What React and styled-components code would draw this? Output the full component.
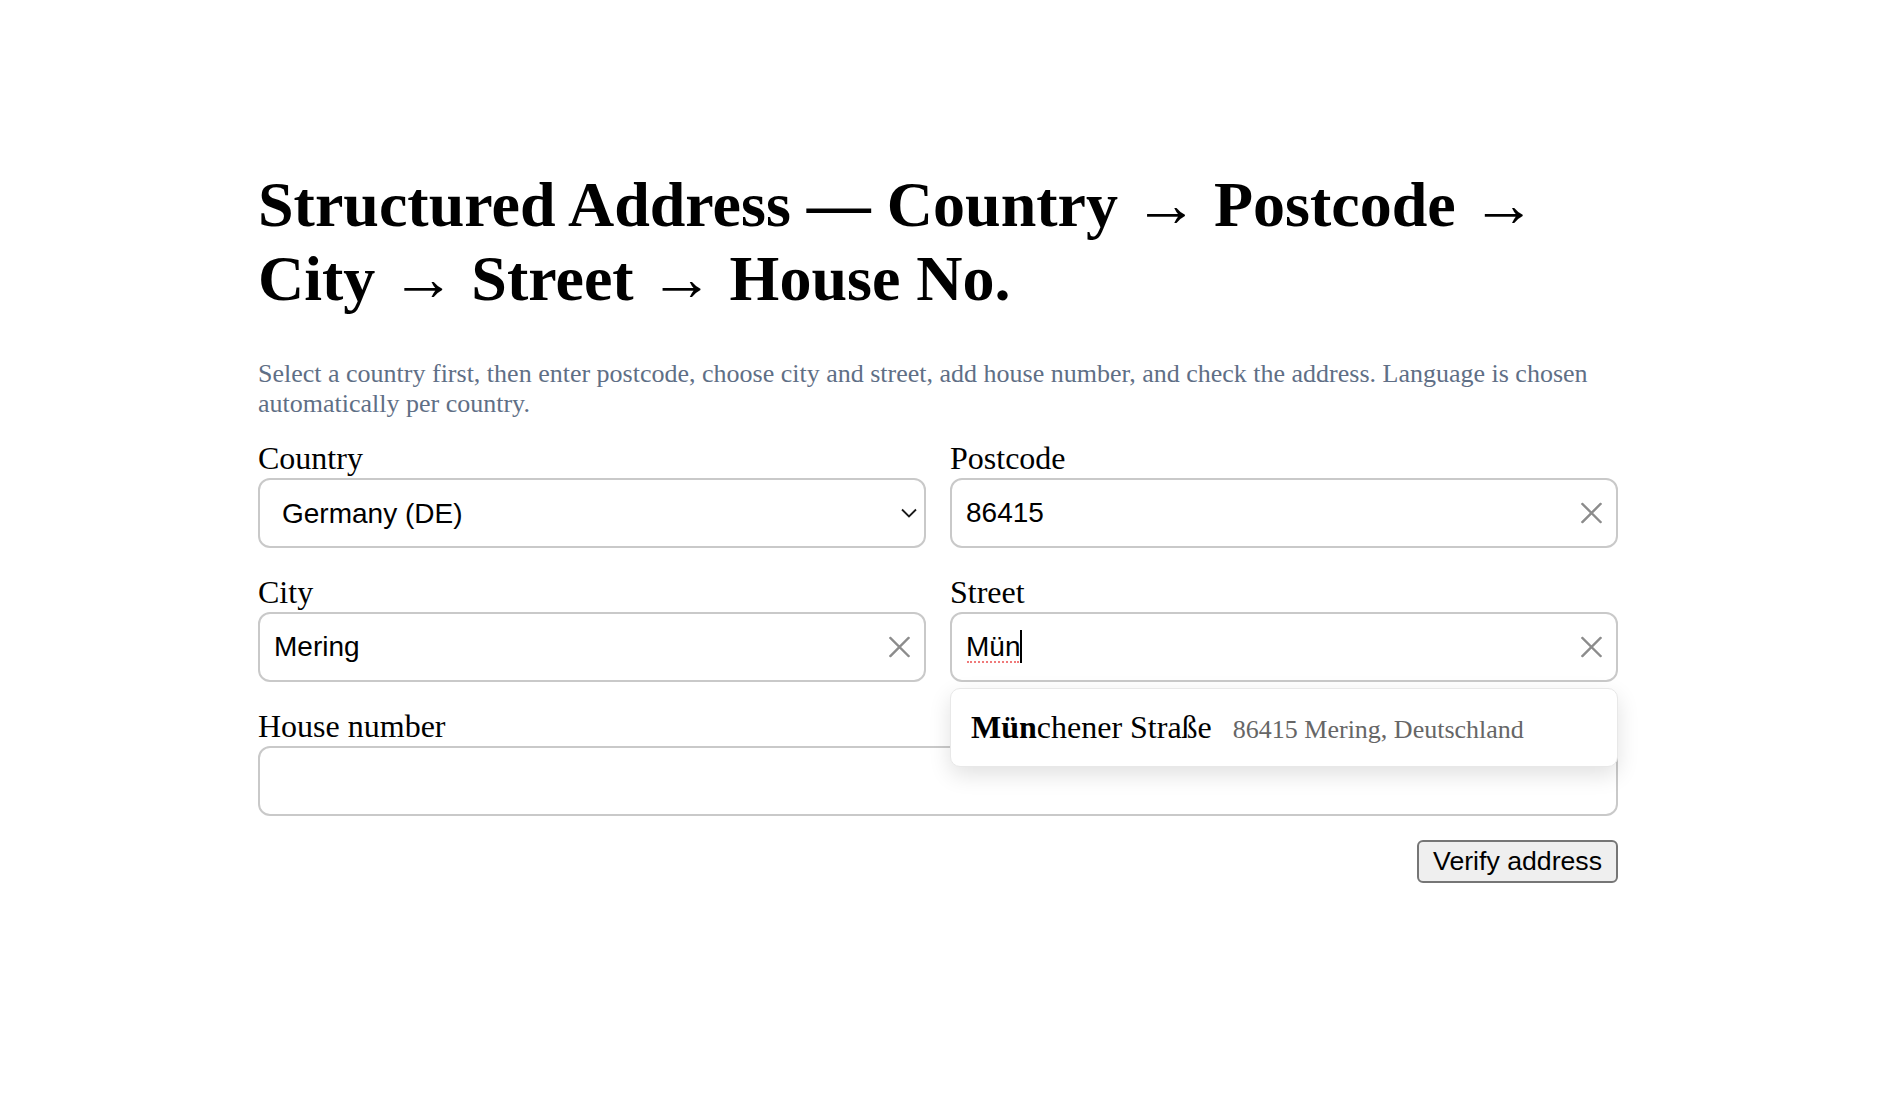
import React, { useState } from 'react';
import styled, { createGlobalStyle } from 'styled-components';

const GlobalStyle = createGlobalStyle`
  html, body {
    margin: 0;
    background: #fff;
  }
  body {
    font-family: "Liberation Serif", "Times New Roman", serif;
    color: #000;
  }
`;

const Page = styled.main`
  width: 1360px;
  padding: 168px 0 80px 258px;
`;

const Title = styled.h1`
  margin: 0 0 43px;
  font-size: 64px;
  font-weight: 700;
  line-height: normal;
`;

const Intro = styled.p`
  margin: 0 0 21px;
  font-size: 26px;
  line-height: normal;
  color: #5f6f86;
`;

const Form = styled.form`
  display: grid;
  grid-template-columns: 1fr 1fr;
  column-gap: 24px;
  row-gap: 26px;
`;

const Field = styled.div`
  display: flex;
  flex-direction: column;
  gap: 1px;
  grid-column: ${(p) => (p.$wide ? '1 / -1' : 'auto')};
`;

const Label = styled.label`
  font-size: 32px;
  line-height: normal;
`;

const Control = styled.div`
  position: relative;
  z-index: ${(p) => (p.$raised ? 3 : 'auto')};
`;

const TextInput = styled.input`
  box-sizing: border-box;
  width: 100%;
  height: 70px;
  padding: 0 56px 0 14px;
  border: 2px solid #c9c9c9;
  border-radius: 12px;
  background: #fff;
  color: #000;
  font: 28px "Liberation Sans", Arial, sans-serif;
  outline: none;
  caret-color: #000;
`;

const Select = styled.select`
  box-sizing: border-box;
  width: 100%;
  height: 70px;
  padding: 0 50px 0 22px;
  border: 2px solid #c9c9c9;
  border-radius: 12px;
  background: #fff;
  color: #000;
  font: 28px "Liberation Sans", Arial, sans-serif;
  appearance: none;
  outline: none;
`;

const Chevron = styled.svg`
  position: absolute;
  right: 9px;
  top: 50%;
  transform: translateY(-50%);
  pointer-events: none;
`;

const ClearButton = styled.button`
  position: absolute;
  right: 16px;
  top: 50%;
  transform: translateY(-50%);
  display: flex;
  padding: 0;
  border: none;
  background: none;
  cursor: pointer;
`;

const SpellMark = styled.span`
  position: absolute;
  left: 17px;
  top: 49px;
  width: ${(p) => p.$width}px;
  border-bottom: 2px dotted #f07a7a;
  pointer-events: none;
`;

const Caret = styled.span`
  position: absolute;
  left: ${(p) => p.$left}px;
  top: 18px;
  width: 2px;
  height: 33px;
  background: #000;
  pointer-events: none;
`;

const Suggestions = styled.ul`
  position: absolute;
  top: calc(100% + 6px);
  left: 0;
  right: 0;
  margin: 0;
  padding: 0;
  list-style: none;
  background: #fff;
  border: 1px solid #e8e8e8;
  border-radius: 10px;
  box-shadow: 0 8px 22px rgba(0, 0, 0, 0.12);
`;

const Suggestion = styled.li`
  display: flex;
  align-items: baseline;
  gap: 21px;
  padding: 20px 20px;
  cursor: pointer;
`;

const StreetName = styled.span`
  font-size: 32px;
  line-height: normal;
  strong {
    font-weight: 700;
  }
`;

const Place = styled.span`
  font-size: 26px;
  color: #666;
`;

const Actions = styled.div`
  display: flex;
  justify-content: flex-end;
  margin-top: 24px;
`;

const VerifyButton = styled.button`
  height: 43px;
  padding: 0 14px;
  border: 2px solid #767676;
  border-radius: 6px;
  background: #efefef;
  color: #000;
  font: 26.67px "Liberation Sans", Arial, sans-serif;
  cursor: pointer;
`;

const ClearIcon = () => (
  <svg width="21" height="21" viewBox="0 0 21 21">
    <path d="M1.5 1.5 L19.5 19.5 M19.5 1.5 L1.5 19.5" stroke="#8c8c8c" strokeWidth="2.4" strokeLinecap="square" fill="none" />
  </svg>
);

const STREETS = [{ name: 'Münchener Straße', place: '86415 Mering, Deutschland' }];

function ClearableInput({ value, onChange, children }) {
  return (
    <Control $raised={!!children}>
      <TextInput value={value} onChange={(e) => onChange(e.target.value)} />
      <ClearButton type="button" aria-label="Clear" onClick={() => onChange('')}>
        <ClearIcon />
      </ClearButton>
      {children}
    </Control>
  );
}

export default function App() {
  const [country, setCountry] = useState('DE');
  const [postcode, setPostcode] = useState('86415');
  const [city, setCity] = useState('Mering');
  const [street, setStreet] = useState('Mün');
  const [house, setHouse] = useState('');

  const typed = street.trim();
  const matches = typed
    ? STREETS.filter((s) => s.name.toLowerCase().startsWith(typed.toLowerCase()) && s.name !== typed)
    : [];

  return (
    <>
      <GlobalStyle />
      <Page>
        <Title>Structured Address — Country → Postcode → City → Street → House No.</Title>
        <Intro>
          Select a country first, then enter postcode, choose city and street, add house number, and check the
          address. Language is chosen automatically per country.
        </Intro>
        <Form onSubmit={(e) => e.preventDefault()}>
          <Field>
            <Label>Country</Label>
            <Control>
              <Select value={country} onChange={(e) => setCountry(e.target.value)}>
                <option value="DE">Germany (DE)</option>
                <option value="AT">Austria (AT)</option>
                <option value="CH">Switzerland (CH)</option>
              </Select>
              <Chevron width="16" height="10" viewBox="0 0 16 10">
                <path d="M1 1.5 L8 8.5 L15 1.5" stroke="#1a1a1a" strokeWidth="1.8" fill="none" />
              </Chevron>
            </Control>
          </Field>
          <Field>
            <Label>Postcode</Label>
            <ClearableInput value={postcode} onChange={setPostcode} />
          </Field>
          <Field>
            <Label>City</Label>
            <ClearableInput value={city} onChange={setCity} />
          </Field>
          <Field>
            <Label>Street</Label>
            <ClearableInput value={street} onChange={setStreet}>
              {street === 'Mün' && (
                <>
                  <SpellMark $width={52} />
                  <Caret $left={70} />
                </>
              )}
              {matches.length > 0 && (
                <Suggestions>
                  {matches.map((s) => (
                    <Suggestion key={s.name} onClick={() => setStreet(s.name)}>
                      <StreetName>
                        <strong>{s.name.slice(0, typed.length)}</strong>
                        {s.name.slice(typed.length)}
                      </StreetName>
                      <Place>{s.place}</Place>
                    </Suggestion>
                  ))}
                </Suggestions>
              )}
            </ClearableInput>
          </Field>
          <Field $wide>
            <Label>House number</Label>
            <Control>
              <TextInput value={house} onChange={(e) => setHouse(e.target.value)} />
            </Control>
          </Field>
        </Form>
        <Actions>
          <VerifyButton type="button">Verify address</VerifyButton>
        </Actions>
      </Page>
    </>
  );
}
